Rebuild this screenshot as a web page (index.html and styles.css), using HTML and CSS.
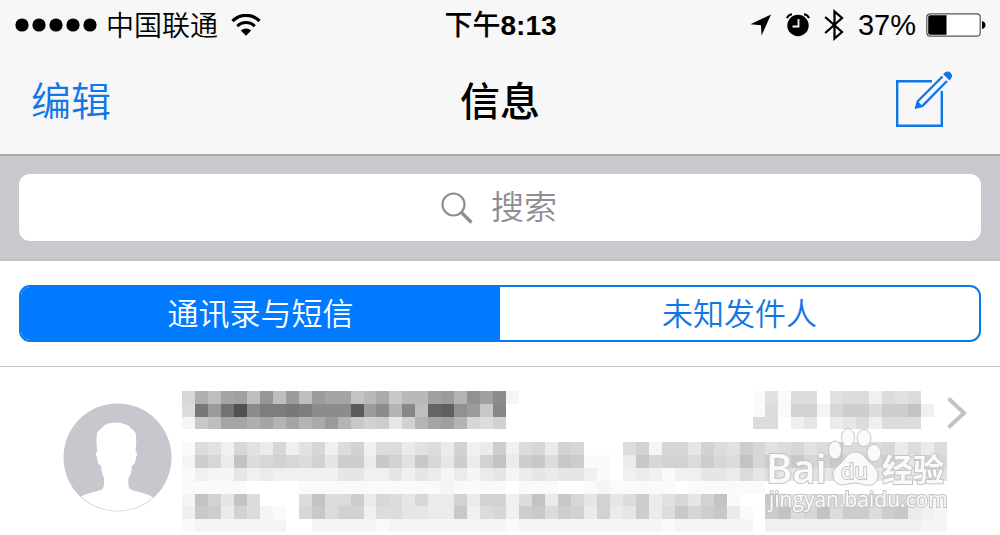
FILE: index.html
```
<!DOCTYPE html>
<html lang="zh-CN">
<head>
    <meta charset="UTF-8">
    <meta name="viewport" content="width=device-width, initial-scale=1">
    <title>信息</title>
    <link rel="stylesheet" href="styles.css">
</head>
<body>
    <header>
        <!-- Status bar -->
        <div class="status-bar">
            <div class="status-left">
                <svg width="82" height="14" viewBox="0 0 82 14">
                    <circle cx="7" cy="7" r="6.6"/>
                    <circle cx="24" cy="7" r="6.6"/>
                    <circle cx="41" cy="7" r="6.6"/>
                    <circle cx="58" cy="7" r="6.6"/>
                    <circle cx="75" cy="7" r="6.6"/>
                </svg>
                <span class="carrier">中国联通</span>
                <svg class="wifi" width="30" height="22" viewBox="0 0 30 22">
                    <path d="M1.5 7A19 19 0 0 1 28.5 7" fill="none" stroke="#000" stroke-width="3.2"/>
                    <path d="M6.3 12.2A12 12 0 0 1 23.7 12.2" fill="none" stroke="#000" stroke-width="3"/>
                    <path d="M9.8 16.5A7.5 7.5 0 0 1 20.2 16.5L15 21.8Z"/>
                </svg>
            </div>
            <div class="time">下午<b>8:13</b></div>
            <div class="status-right">
                <svg width="22" height="22" viewBox="0 0 22 22">
                    <path d="M21 0.5L11.5 21.5L11 11.2L0.5 10.2Z"/>
                </svg>
                <svg width="24" height="24" viewBox="0 0 24 24">
                    <circle cx="12" cy="12.5" r="10.7"/>
                    <path d="M1 5.2Q2.2 1.8 6 1.3M23 5.2Q21.8 1.8 18 1.3" fill="none" stroke="#000" stroke-width="2"/>
                    <path d="M12.5 6V13.5H6.5" fill="none" stroke="#f7f7f7" stroke-width="1.8"/>
                </svg>
                <svg width="20" height="32" viewBox="0 0 20 32">
                    <path d="M1.2 8L18 23L10.5 29.5V2.5L18 9L1.2 24" fill="none" stroke="#000" stroke-width="2.3"/>
                </svg>
                <span class="percent">37%</span>
                <svg class="battery" width="60" height="24" viewBox="0 0 60 24">
                    <rect x="0.8" y="0.8" width="53.4" height="22.4" rx="3.5" fill="#fff" stroke="#555" stroke-width="1.2"/>
                    <path d="M4 2.2H20.5V21.8H4Q2.2 21.8 2.2 20V4Q2.2 2.2 4 2.2Z"/>
                    <path d="M56 8Q59.5 9 59.5 12Q59.5 15 56 16Z"/>
                </svg>
            </div>
        </div>

        <!-- Navigation bar -->
        <nav class="nav-bar">
            <button class="edit-btn" type="button">编辑</button>
            <h1>信息</h1>
            <button class="compose-btn" type="button" aria-label="新信息">
                <svg width="56" height="56" viewBox="0 0 56 56" fill="none" stroke="#1277e6" stroke-width="2.4">
                    <path d="M36 10.2H1.2V54.8H45.8V20"/>
                    <path d="M46.5 5.5L22 30L20.3 36.3L26.5 34.8L51 10"/>
                    <path d="M19.5 37L21.5 30.5L26 35Z" fill="#1277e6" stroke-width="1"/>
                    <path d="M48 3.2Q51 -0.5 54.2 2.2Q57 5 53.5 8.7Z" fill="#1277e6" stroke-width="1.2"/>
                </svg>
            </button>
        </nav>
    </header>

    <main>
        <div class="search-bar">
            <label class="search-box">
                <svg width="32" height="32" viewBox="0 0 32 32" fill="none" stroke="#8e8e93">
                    <circle cx="12.5" cy="12.5" r="11" stroke-width="2.2"/>
                    <path d="M20.5 20.5L30.5 30.5" stroke-width="3.2"/>
                </svg>
                <input type="text" placeholder="搜索" aria-label="搜索">
            </label>
        </div>

        <div class="tabs">
            <button class="tab active" type="button">通讯录与短信</button>
            <button class="tab" type="button">未知发件人</button>
        </div>

        <!-- Message list -->
        <div class="message">
            <svg class="avatar" width="109" height="109" viewBox="0 0 109 109">
                <circle cx="54.5" cy="54.5" r="54" fill="#c8c7ce"/>
                <path d="M18 93.5C24 89.5 34 89.5 39.5 86C41.5 83 41 79 41 74.5C38.5 71 38.5 67 38 62.5C35 62 34.5 58 34 54.5C32.5 52 32.5 49.5 34.3 49C33.5 40 33 34 34.5 29C37 26.5 39 25 41 22.5C47 18.5 58 18 66 23C68 26 71 27 72.5 30C74 37 73 43 72.5 49C74.5 49.5 74.5 52 73 54.5C72.5 58 72 62 69 62.5C68.5 67 68.5 71 65.5 74.5C65 79 65 84 67.5 86.5C73 89 83 89.5 90 94.5Q74 108 54.5 108Q34 108 18 93.5Z" fill="#fff"/>
            </svg>
            <canvas id="preview" class="preview" width="59" height="11"></canvas>
            <svg class="chevron" width="20" height="32" viewBox="0 0 20 32">
                <path d="M1.5 1.5L17 16L1.5 30.5" fill="none" stroke="#c2c2c7" stroke-width="4"/>
            </svg>

            <svg class="watermark" width="184" height="88" viewBox="0 0 184 88">
                <text class="mark-logo" x="0" y="56">Bai</text>
                <g>
                    <ellipse cx="69" cy="23" rx="6.5" ry="9"/>
                    <ellipse cx="82" cy="10.5" rx="6.5" ry="9"/>
                    <ellipse cx="98" cy="11" rx="7" ry="8.5"/>
                    <ellipse cx="108" cy="26" rx="7" ry="8.5"/>
                    <path d="M89 25C97 25 99 31 103 35C109 40 113 44 112 50C110 60 102 59 96 57Q89 55 82 57C75 59 68 58 67 49C66 43 71 40 75 36C80 31 82 25 89 25Z"/>
                </g>
                <text class="mark-du" x="75" y="52">du</text>
                <text class="mark-cn" x="116" y="54">经验</text>
                <text class="mark-url" x="3" y="80">jingyan.baidu.com</text>
            </svg>
        </div>
    </main>

    <script>
        // Pixelated preview, one base 36 digit per block: 0 is white, z is darkest
        const rows = [
            "8gdijdldkd kiicehbeej kfmjn20000 0000000000 0000161770 677376700",
            "7rksznqqrq nnnxknfodv wmkbo00000 0000000000 0000171992 8aa7aac30",
            "2bdiigifif hkfb9a59fi jf87900000 0000000000 0000770350 457377700",
            "0000000000 0000000000 0000000000 0000000000 0000000000 000000000",
            "1763864836 8379377467 4934a37849 8000792885 976a867867 b77784747",
            "2a84c78987 95aa4b96b8 5a49c4ab7b a1104b8997 a87c8a8b89 b998a9598",
            "1322534333 3355335354 2424524545 5310343133 5547575565 655566566",
            "1111100001 1111111111 2111101110 0121111101 1111100000 000000000",
            "2c95c70007 c77a487584 4949937c4b 85957a4685 9c100b7567 857968532",
            "3ba4972108 b799377554 4b3783ab7a 94945a47b8 ab410ac78c 7aa7ab432",
            "1222222200 2222212222 2222212222 2222222122 2222033333 333333322"
        ];

        const canvas = document.getElementById("preview");
        const ctx = canvas.getContext("2d");
        rows.forEach((row, y) => {
            [...row.replaceAll(" ", "")].forEach((cell, x) => {
                const grey = 255 - 5 * parseInt(cell, 36);
                ctx.fillStyle = `rgb(${grey}, ${grey}, ${grey})`;
                ctx.fillRect(x, y, 1, 1);
            });
        });
    </script>
</body>
</html>
```
FILE: styles.css
```
* {
    box-sizing: border-box;
}

body {
    margin: 0;
    background-color: #fff;
    color: #000;
    font-family: "Liberation Sans", "Noto Sans CJK SC", sans-serif;
    overflow: hidden;
}

button {
    padding: 0;
    border: none;
    background: none;
    color: #1277e6;
    font-family: inherit;
    font-weight: 350;
    cursor: pointer;
}

svg {
    display: block;
    flex-shrink: 0;
}

header {
    background-color: #f7f7f7;
    border-bottom: 2px solid #acacae;
}

.status-bar {
    display: grid;
    grid-template-columns: 1fr auto 1fr;
    align-items: center;
    height: 50px;
    padding: 0 14px 0 15px;
    font-size: 28px;
    line-height: 40px;
}

.status-left,
.status-right {
    display: flex;
    align-items: center;
}

.status-left {
    gap: 9px;
}

.carrier {
    padding-top: 4px;
    font-weight: 350;
}

.wifi {
    margin-left: 4px;
}

.time {
    padding-top: 2px;
    font-weight: 500;
}

.status-right {
    justify-content: flex-end;
    gap: 14px;
}

.percent {
    font-size: 29px;
}

.battery {
    margin-left: -4px;
}

.nav-bar {
    display: grid;
    grid-template-columns: 1fr auto 1fr;
    align-items: center;
    height: 104px;
    padding: 0 31px;
}

.edit-btn {
    justify-self: start;
    font-size: 40px;
    line-height: 56px;
}

.nav-bar h1 {
    margin: 0;
    font-size: 40px;
    font-weight: 500;
    line-height: 56px;
}

.compose-btn {
    justify-self: end;
    margin: 0 17px 6px 0;
}

.search-bar {
    padding: 18px 19px;
    background-color: #c9c8ce;
    border-bottom: 2px solid #c2c1c6;
}

.search-box {
    display: flex;
    justify-content: center;
    align-items: center;
    gap: 18px;
    height: 67px;
    border-radius: 11px;
    background-color: #fff;
}

.search-box input {
    width: 68px;
    padding: 0;
    border: none;
    outline: none;
    background: none;
    font-family: inherit;
    font-size: 33px;
    font-weight: 350;
}

.search-box input::placeholder {
    color: #8e8e93;
}

.tabs {
    display: flex;
    margin: 24px 19px;
    border: 2px solid #087aec;
    border-radius: 11px;
    overflow: hidden;
}

.tab {
    flex: 1;
    height: 53px;
    padding-bottom: 4px;
    font-size: 31px;
}

.tab.active {
    background-color: #007aff;
    color: #fff;
}

.message {
    position: relative;
    display: flex;
    align-items: flex-start;
    padding: 24px 33px 3px 63px;
    border-top: 1px solid #c8c7cc;
}

.avatar {
    margin-top: 12px;
    margin-right: 10px;
}

.preview {
    flex: 1;
    min-width: 0;
    height: 141px;
    image-rendering: pixelated;
}

.chevron {
    margin-top: 6px;
}

.watermark {
    position: absolute;
    top: 60px;
    right: 50px;
    fill: #fafafa;
    stroke: #c4c4c6;
    stroke-width: 1;
    font-family: "Open Sans", "Noto Sans CJK SC", sans-serif;
}

.watermark text {
    paint-order: stroke;
    stroke-width: 2;
}

.mark-logo {
    font-size: 40px;
    font-weight: 600;
}

.mark-du {
    font-size: 22px;
}

.mark-cn {
    font-size: 31px;
    font-weight: bold;
}

.mark-url {
    font-size: 21px;
}
```
